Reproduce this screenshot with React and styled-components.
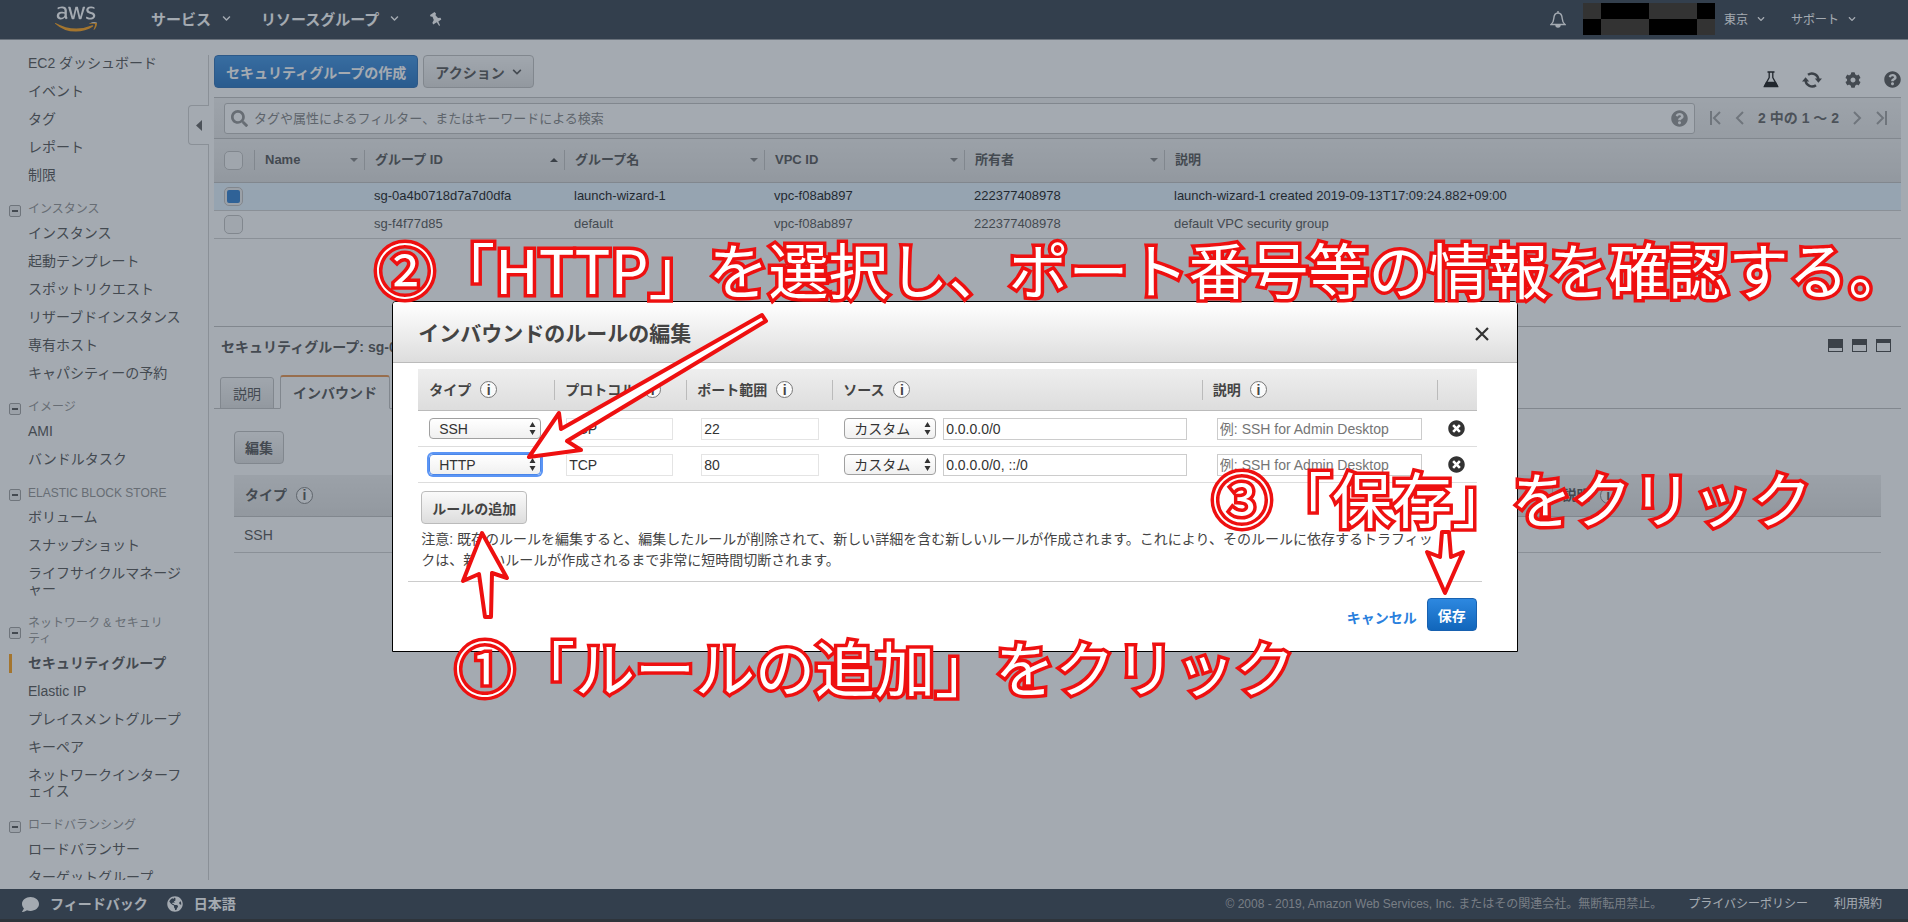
import styled, { createGlobalStyle, css } from 'styled-components'
import { FaAws, FaChevronDown, FaCog, FaComment, FaGlobeAmericas, FaQuestionCircle, FaSearch, FaTimesCircle } from 'react-icons/fa'

const GlobalStyle = createGlobalStyle`
    * {
        box-sizing: border-box;
    }

    body {
        margin: 0;
        background: #ffffff;
        color: #444444;
        font-family: "Liberation Sans", "Noto Sans CJK JP", sans-serif;
        font-size: 14px;
        line-height: 16px;
    }

    button, input, select {
        margin: 0;
        font-family: inherit;
        font-size: 14px;
        color: inherit;
    }

    a {
        color: inherit;
        text-decoration: none;
    }

    svg {
        display: block;
        flex: none;
    }
`

const sections = [
    {items: ["EC2 ダッシュボード", "イベント", "タグ", "レポート", "制限"]},
    {title: "インスタンス", items: ["インスタンス", "起動テンプレート", "スポットリクエスト", "リザーブドインスタンス", "専有ホスト", "キャパシティーの予約"]},
    {title: "イメージ", items: ["AMI", "バンドルタスク"]},
    {title: "ELASTIC BLOCK STORE", items: ["ボリューム", "スナップショット", "ライフサイクルマネージャー"]},
    {title: "ネットワーク & セキュリティ", items: ["セキュリティグループ", "Elastic IP", "プレイスメントグループ", "キーペア", "ネットワークインターフェイス"]},
    {title: "ロードバランシング", items: ["ロードバランサー", "ターゲットグループ"]},
]

const columns = [
    {name: "Name", width: 110, sort: "down"},
    {name: "グループ ID", width: 200, sort: "up"},
    {name: "グループ名", width: 200, sort: "down"},
    {name: "VPC ID", width: 200, sort: "down"},
    {name: "所有者", width: 200, sort: "down"},
    {name: "説明"},
]

const groups = [
    {id: "sg-0a4b0718d7a7d0dfa", name: "launch-wizard-1", vpc: "vpc-f08ab897", owner: "222377408978", description: "launch-wizard-1 created 2019-09-13T17:09:24.882+09:00", selected: true},
    {id: "sg-f4f77d85", name: "default", vpc: "vpc-f08ab897", owner: "222377408978", description: "default VPC security group", selected: false},
]

const ruleColumns = [
    {name: "タイプ", width: 136},
    {name: "プロトコル", width: 132},
    {name: "ポート範囲", width: 146},
    {name: "ソース"},
    {name: "説明", width: 235},
]

const rules = [
    {type: "SSH", protocol: "TCP", port: "22", source: "0.0.0.0/0"},
    {type: "HTTP", protocol: "TCP", port: "80", source: "0.0.0.0/0, ::/0", focused: true},
]

const Page = styled.div`
    display: flex;
    flex-direction: column;
    height: 100vh;
    overflow: hidden;
`

const TopBar = styled.header`
    display: flex;
    align-items: center;
    height: 40px;
    flex: none;
    padding: 0 52px 2px 55px;
    background: #232f3e;
    border-bottom: 1px solid #8c9196;
    color: #ffffff;
`

const LogoLink = styled.a`
    margin-right: 54px;
`

const LogoFill = styled.svg`
    position: absolute;
`

const NavButton = styled.button`
    display: flex;
    align-items: center;
    gap: ${props => props.$small ? 9 : 11}px;
    margin-right: ${props => props.$small ? 26 : 30}px;
    padding: 0;
    border: 0;
    background: none;
    font-size: ${props => props.$small ? 12 : 15}px;
    font-weight: ${props => props.$small ? 400 : 700};
    white-space: nowrap;

    &:last-child {
        margin-right: 0;
    }
`

const IconButton = styled.button`
    display: flex;
    padding: 0;
    border: 0;
    background: none;
`

const Spacer = styled.div`
    flex: 1;
`

const AccountMask = styled.div`
    position: relative;
    z-index: 20;
    display: grid;
    grid-template-columns: 18px 48px 48px 18px;
    grid-template-rows: 16px 16px;
    margin: 0 9px 0 17px;
`

const MaskCell = styled.div`
    background: ${props => props.$dark ? '#000000' : '#333333'};
`

const Body = styled.div`
    display: flex;
    flex: 1;
    min-height: 0;
    padding-bottom: 9px;
`

const Sidebar = styled.nav`
    width: 208px;
    flex: none;
    padding: 9px 24px 0 9px;
    overflow: hidden;
`

const SectionTitle = styled.h2`
    display: flex;
    align-items: center;
    gap: 7px;
    margin: 0;
    padding: 12px 10px 2px 0;
    color: #888888;
    font-size: 12px;
    font-weight: 400;
    line-height: 16px;
`

const CollapseBox = styled.button`
    display: flex;
    align-items: center;
    justify-content: center;
    width: 12px;
    height: 12px;
    flex: none;
    margin-top: 4px;
    padding: 0;
    border: 1px solid #999999;
    border-radius: 2px;
    background: #eeeeee;

    &::before {
        content: "";
        width: 6px;
        height: 2px;
        background: #444444;
    }
`

const SideLink = styled.a`
    display: block;
    padding: 6px 0 6px 19px;
    word-break: break-all;
    line-break: anywhere;

    ${props => props.$current && css`
        padding-left: 16px;
        border-left: 3px solid #ff9900;
        border-image: linear-gradient(transparent 20%, #ff9900 20%, #ff9900 84%, transparent 84%) 1;
        font-weight: 700;
    `}
`

const Divider = styled.div`
    position: relative;
    width: 1px;
    flex: none;
    margin-top: 15px;
    background: #cccccc;
`

const SidebarToggle = styled.button`
    position: absolute;
    top: 50px;
    right: 0;
    display: flex;
    align-items: center;
    justify-content: center;
    width: 21px;
    height: 40px;
    padding: 0;
    border: 1px solid #cccccc;
    border-right: 0;
    border-radius: 4px 0 0 4px;
    background: #ffffff;
`

const Main = styled.main`
    flex: 1;
    min-width: 0;
    padding: 15px 7px 0 5px;
`

const ActionRow = styled.div`
    display: flex;
    align-items: flex-end;
    gap: 5px;
    margin-bottom: 9px;
`

const Button = styled.button`
    display: inline-flex;
    align-items: center;
    gap: 7px;
    height: 33px;
    padding: 0 ${props => props.$wide ? 11 : 10}px;
    border: 1px solid #bbbbbb;
    border-radius: 4px;
    background: linear-gradient(#fafafa, #dddddd);
    font-weight: 700;
    white-space: nowrap;

    ${props => props.$primary && css`
        border-color: #1861b0;
        background: linear-gradient(#2d88e0, #1166bb);
        color: #ffffff;
    `}
`

const PageTools = styled.div`
    display: flex;
    align-items: center;
    gap: 23px;
    margin-left: auto;
`

const FilterBar = styled.div`
    display: flex;
    align-items: center;
    height: 42px;
    padding: 0 14px 0 10px;
    border-top: 1px solid #bbbbbb;
    border-bottom: 1px solid #bbbbbb;
    background: linear-gradient(#f2f2f2, #e4e4e4);
`

const SearchBox = styled.label`
    display: flex;
    align-items: center;
    gap: 6px;
    flex: 1;
    height: 31px;
    margin-right: 15px;
    padding: 0 6px;
    border: 1px solid #bbbbbb;
    border-radius: 3px;
    background: #ffffff;
    color: #888888;
`

const SearchInput = styled.input`
    flex: 1;
    min-width: 0;
    padding: 0;
    border: 0;
    background: none;
    font-size: 13px;

    &::placeholder {
        color: #777777;
    }
`

const Pager = styled.div`
    display: flex;
    align-items: center;
    gap: 14px;
    color: #555555;
    font-weight: 700;
    white-space: nowrap;
`

const GroupTable = styled.table`
    width: 100%;
    border-collapse: collapse;
    table-layout: fixed;
    font-size: 13px;

    th {
        height: 43px;
        padding: 0;
        border-bottom: 1px solid #bbbbbb;
        background: linear-gradient(#eeeeee, #dddddd);
        text-align: left;
    }

    td {
        height: 28px;
        padding: 0 10px;
        border-bottom: 1px solid #cccccc;
    }

    th:first-child, td:first-child {
        padding: 0 0 0 10px;
    }
`

const GroupRow = styled.tr`
    background: ${props => props.$selected ? '#e4f3ff' : '#ffffff'};
    color: ${props => props.$selected ? '#000000' : '#444444'};
`

const HeaderCell = styled.div`
    display: flex;
    align-items: center;
    gap: 9px;
    height: 20px;
    padding: 0 6px 0 ${props => props.$first ? 11 : 10}px;
    border-left: ${props => props.$first ? 0 : '1px solid #bbbbbb'};
    white-space: nowrap;
`

const SortMark = styled.span`
    margin-left: auto;
    border: 4px solid transparent;
    border-top-width: ${props => props.$up ? 0 : 4}px;
    border-bottom-width: ${props => props.$up ? 4 : 0}px;
    border-top-color: #777777;
    border-bottom-color: #333333;
`

const Checkbox = styled.input`
    display: block;
    appearance: none;
    width: 19px;
    height: 19px;
    margin: 0;
    border: 1px solid #bbbbbb;
    border-radius: 5px;
    background: #f8f8f8;

    &:checked {
        border-width: 3px;
        border-color: #eeeeee;
        outline: 1px solid #bbbbbb;
        outline-offset: -1px;
        background: #1c74cc;
    }
`

const DetailPane = styled.section`
    margin-top: 87px;
    border-top: 1px solid #bbbbbb;
`

const DetailHeader = styled.div`
    display: flex;
    align-items: center;
    justify-content: space-between;
    height: 40px;
    padding: 0 10px 0 7px;
`

const DetailTitle = styled.h2`
    margin: 0;
    font-size: 14px;
`

const PaneButtons = styled.div`
    display: flex;
    gap: 9px;
    margin-bottom: 2px;
`

const PaneButton = styled.button`
    width: 15px;
    height: 13px;
    padding: 0;
    border: 1px solid #333333;
    background: linear-gradient(#333333 ${props => props.$fill}px, transparent ${props => props.$fill}px);
`

const Tabs = styled.div`
    display: flex;
    align-items: flex-end;
    gap: 6px;
    margin-top: 8px;
    padding-left: 6px;
    box-shadow: inset 0 -1px #bbbbbb;
`

const Tab = styled.button`
    height: ${props => props.$active ? 34 : 32}px;
    padding: 0 12px;
    border: 1px solid #bbbbbb;
    border-top: ${props => props.$active ? '2px solid #e88b3e' : '1px solid #bbbbbb'};
    border-bottom-color: ${props => props.$active ? '#ffffff' : '#bbbbbb'};
    border-radius: 3px 3px 0 0;
    background: ${props => props.$active ? '#ffffff' : 'linear-gradient(#f8f8f8, #dddddd)'};
    font-weight: ${props => props.$active ? 700 : 400};
`

const TabPanel = styled.div`
    padding: 22px 20px 0;
`

const RuleTable = styled.table`
    width: 100%;
    border-collapse: collapse;
    table-layout: fixed;

    th {
        height: 42px;
        padding: 0;
        border-bottom: 1px solid #bbbbbb;
        background: linear-gradient(#eeeeee, #dddddd);
        text-align: left;
    }

    td {
        height: 36px;
        padding: 0 0 0 10px;
        border-bottom: 1px solid #cccccc;
    }
`

const DetailTable = styled(RuleTable)`
    margin-top: 11px;
`

const EditTable = styled(RuleTable)`
    td {
        padding: 0 0 0 11px;
        border-bottom-color: #dddddd;
    }

    td:nth-child(2), td:nth-child(4) {
        padding-left: 12px;
    }

    td:nth-child(3), td:nth-child(5) {
        padding-left: 15px;
    }
`

const InfoMark = styled.span`
    display: inline-flex;
    align-items: center;
    justify-content: center;
    width: 17px;
    height: 17px;
    border: 1px solid #777777;
    border-radius: 50%;
    background: #fafafa;
    font-size: 14px;
`

const Footer = styled.footer`
    display: flex;
    align-items: center;
    height: 33px;
    flex: none;
    padding: 0 26px 0 22px;
    border-bottom: 3px solid #1a1a1a;
    background: #232f3e;
    color: #ffffff;
    white-space: nowrap;
`

const FooterLink = styled.a`
    display: flex;
    align-items: center;
    gap: 11px;
    margin-right: 19px;
    font-weight: 700;
`

const LegalRow = styled.div`
    display: flex;
    gap: 26px;
    margin-left: auto;
    font-size: 12px;

    span {
        color: #aaaaaa;
    }
`

const Backdrop = styled.div`
    position: fixed;
    inset: 0;
    z-index: 10;
    display: flex;
    align-items: center;
    justify-content: center;
    padding: 31px 0 0 2px;
    background: rgba(68, 80, 95, 0.486);
`

const Dialog = styled.section`
    width: 59vw;
    border: 1px solid #000000;
    border-radius: 4px 4px 0 0;
    background: #ffffff;
    overflow: hidden;
`

const DialogHeader = styled.div`
    display: flex;
    align-items: center;
    justify-content: space-between;
    height: 61px;
    padding: 5px 28px 0 25px;
    border-bottom: 1px solid #bbbbbb;
    background: linear-gradient(#ffffff, #dddddd);
`

const DialogTitle = styled.h1`
    margin: 0;
    font-size: 21px;
    line-height: 28px;
`

const DialogBody = styled.div`
    padding: 6px 40px 10px 25px;
`

const SelectWrap = styled.span`
    position: relative;
    display: block;
    width: ${props => props.$width}px;
    flex: none;
`

const Select = styled.select`
    display: block;
    appearance: none;
    width: 100%;
    height: 21px;
    padding: 0 20px 0 9px;
    border: 1px solid #a0a0a0;
    border-radius: 4px;
    background: linear-gradient(#ffffff, #f0f0f0);
    color: #333333;
    line-height: 18px;

    ${props => props.$focused && css`
        border-color: #4a86e8;
        box-shadow: 0 0 0 2px #5b95f5;
    `}
`

const SelectArrows = styled.svg`
    position: absolute;
    top: 4px;
    right: 5px;
    pointer-events: none;
`

const TextInput = styled.input`
    display: block;
    width: ${props => props.$width ? `${props.$width}px` : '100%'};
    height: 22px;
    min-width: 0;
    padding: 0 2px;
    border: 1px solid ${props => props.$faint ? '#e4e4e4' : '#cccccc'};
    background: #ffffff;
    color: #333333;

    &::placeholder {
        color: #757575;
    }
`

const SourceFields = styled.div`
    display: flex;
    align-items: center;
    gap: 7px;
    padding-right: 15px;
`

const AddRow = styled.div`
    padding: 8px 3px 5px;
`

const Notice = styled.p`
    margin: 0;
    padding: 0 42px 0 3px;
    line-height: 21px;
`

const DialogFooter = styled.div`
    display: flex;
    align-items: center;
    justify-content: flex-end;
    gap: 10px;
    margin: 0 35px 0 15px;
    padding: 16px 5px 20px;
    border-top: 1px solid #cccccc;
`

const CancelLink = styled.a`
    padding-top: 6px;
    color: #2a80dd;
    font-weight: 700;
`

const Notes = styled.div`
    position: absolute;
    inset: 0;
    z-index: 30;
    overflow: hidden;
    pointer-events: none;
`

const Note = styled.p`
    position: absolute;
    left: ${props => props.$x}px;
    top: ${props => props.$y}px;
    margin: 0;
    color: #ffffff;
    font-family: "Noto Sans CJK JP", sans-serif;
    font-size: 60px;
    line-height: 64px;
    white-space: nowrap;
    -webkit-text-stroke: 7px #ee1010;
    paint-order: stroke fill;
    stroke-linejoin: round;
`

const Arrows = styled.svg`
    width: 100%;
    height: 100%;
`

function Pin() {
    return (
        <svg width="13" height="14" viewBox="0 0 13 14" fill="currentColor">
            <path d="M1 3 5.500 0 7 1.500 6.500 3.200 9 6l2.500-.2.8 1.700-3 2 1.700 3.800-.8.6-2.400-3.600-3.600 2.200-.8-1.700L4.800 8 3.500 4.700 1.500 4.500Z" />
        </svg>
    )
}

function Bell() {
    return (
        <svg width="16" height="18" viewBox="0 0 16 18" fill="none" stroke="currentColor" strokeWidth="1.400">
            <path d="M8 1v1.500M1 14.500h14c-2-1.500-2.600-3-2.800-6C12 5 10.500 3 8 3S4 5 3.800 8.500c-.2 3-.8 4.500-2.800 6Z" />
            <path d="M6 15a2 2 0 0 0 4 0Z" fill="currentColor" />
        </svg>
    )
}

function Flask() {
    return (
        <svg width="16" height="17" viewBox="0 0 16 17" fill="none" stroke="#000000" strokeWidth="1.300">
            <path d="M4.500 1h7M6.200 1v5.500L1.500 15.200h13L9.800 6.500V1" />
            <path d="M3.500 11.500h9l2 4h-13Z" fill="#000000" />
        </svg>
    )
}

function Refresh() {
    return (
        <svg width="20" height="16" viewBox="0 0 20 16" fill="none" stroke="#333333" strokeWidth="2.400">
            <path d="M6 2.800A6.500 6.500 0 0 1 16.400 7.500M14 13.200A6.500 6.500 0 0 1 3.600 8.500" />
            <path d="M12.800 6.500h7.200l-3.600 4.300ZM0 9.500h7.200L3.600 5.200Z" fill="#333333" stroke="none" />
        </svg>
    )
}

function PagerIcon({ flip, bar }) {
    return (
        <svg width={bar ? 11 : 9} height="14" viewBox={bar ? '0 0 11 14' : '0 0 9 14'} fill="none" stroke="#999999" strokeWidth="2">
            <g transform={flip ? `translate(${bar ? 11 : 9} 0) scale(-1 1)` : undefined}>
                {bar ? <path d="M1 0v14M10 1 4 7l6 6" /> : <path d="M8 1 2 7l6 6" />}
            </g>
        </svg>
    )
}

function DropDown({ label, options, width, focused }) {
    return (
        <SelectWrap $width={width}>
            <Select aria-label={label} $focused={focused}>
                {options.map(option => <option key={option}>{option}</option>)}
            </Select>
            <SelectArrows width="7" height="13" viewBox="0 0 7 13" fill="#333333">
                <path d="M3.500 0 6.500 5h-6ZM3.500 13l3-5h-6Z" />
            </SelectArrows>
        </SelectWrap>
    )
}

function Navigation() {
    return (
        <TopBar>
            <LogoLink href="#" aria-label="aws">
                <LogoFill width="0" height="0">
                    <linearGradient id="logo" x1="0" y1="0" x2="0" y2="1">
                        <stop offset="0.640" stopColor="#ffffff" />
                        <stop offset="0.640" stopColor="#ff9900" />
                    </linearGradient>
                </LogoFill>
                <FaAws size={42} fill="url(#logo)" />
            </LogoLink>
            <NavButton>サービス<FaChevronDown size={9} /></NavButton>
            <NavButton>リソースグループ<FaChevronDown size={9} /></NavButton>
            <IconButton aria-label="pin"><Pin /></IconButton>
            <Spacer />
            <IconButton aria-label="bell"><Bell /></IconButton>
            <AccountMask>
                {[0, 1, 0, 1, 1, 0, 1, 0].map((dark, i) => <MaskCell key={i} $dark={dark} />)}
            </AccountMask>
            <NavButton $small>東京<FaChevronDown size={8} /></NavButton>
            <NavButton $small>サポート<FaChevronDown size={8} /></NavButton>
        </TopBar>
    )
}

function SideMenu() {
    return (
        <Sidebar>
            {sections.map((section, i) =>
            <div key={i}>
                {section.title && <SectionTitle><CollapseBox aria-label={section.title} />{section.title}</SectionTitle>}
                {section.items.map(item =>
                    <SideLink key={item} href="#" $current={item === "セキュリティグループ"}>{item}</SideLink>
                )}
            </div>
            )}
        </Sidebar>
    )
}

function SecurityGroups() {
    return (
        <GroupTable>
            <colgroup>
                <col width="40" />
                {columns.map(column => <col key={column.name} width={column.width} />)}
            </colgroup>
            <thead>
                <tr>
                    <th><Checkbox type="checkbox" aria-label="all" /></th>
                    {columns.map(column =>
                    <th key={column.name}>
                        <HeaderCell>
                            {column.name}
                            {column.sort && <SortMark $up={column.sort === "up"} />}
                        </HeaderCell>
                    </th>
                    )}
                </tr>
            </thead>
            <tbody>
                {groups.map(group =>
                <GroupRow key={group.id} $selected={group.selected}>
                    <td><Checkbox type="checkbox" aria-label={group.id} defaultChecked={group.selected} /></td>
                    <td></td>
                    <td>{group.id}</td>
                    <td>{group.name}</td>
                    <td>{group.vpc}</td>
                    <td>{group.owner}</td>
                    <td>{group.description}</td>
                </GroupRow>
                )}
            </tbody>
        </GroupTable>
    )
}

function Details() {
    return (
        <DetailPane>
            <DetailHeader>
                <DetailTitle>セキュリティグループ: {groups[0].id}</DetailTitle>
                <PaneButtons>
                    <PaneButton aria-label="bottom" $fill={8} />
                    <PaneButton aria-label="split" $fill={5} />
                    <PaneButton aria-label="top" $fill={3} />
                </PaneButtons>
            </DetailHeader>
            <Tabs>
                <Tab>説明</Tab>
                <Tab $active>インバウンド</Tab>
            </Tabs>
            <TabPanel>
                <Button>編集</Button>
                <DetailTable>
                    <thead>
                        <tr>
                            <th width="80%"><HeaderCell $first>タイプ<InfoMark>i</InfoMark></HeaderCell></th>
                            <th><HeaderCell>説明<InfoMark>i</InfoMark></HeaderCell></th>
                        </tr>
                    </thead>
                    <tbody>
                        <tr>
                            <td>SSH</td>
                            <td></td>
                        </tr>
                    </tbody>
                </DetailTable>
            </TabPanel>
        </DetailPane>
    )
}

function RuleDialog() {
    return (
        <Backdrop>
            <Dialog role="dialog" aria-labelledby="dialog-title">
                <DialogHeader>
                    <DialogTitle id="dialog-title">インバウンドのルールの編集</DialogTitle>
                    <IconButton aria-label="close">
                        <svg width="14" height="14" viewBox="0 0 14 14" stroke="#333333" strokeWidth="2.200">
                            <path d="M1 1l12 12M13 1 1 13" />
                        </svg>
                    </IconButton>
                </DialogHeader>
                <DialogBody>
                    <EditTable>
                        <colgroup>
                            {ruleColumns.map(column => <col key={column.name} width={column.width} />)}
                            <col width="40" />
                        </colgroup>
                        <thead>
                            <tr>
                                {ruleColumns.map((column, i) =>
                                <th key={column.name}>
                                    <HeaderCell $first={i === 0}>{column.name}<InfoMark>i</InfoMark></HeaderCell>
                                </th>
                                )}
                                <th><HeaderCell /></th>
                            </tr>
                        </thead>
                        <tbody>
                            {rules.map(rule =>
                            <tr key={rule.type}>
                                <td><DropDown label="タイプ" options={[rule.type]} width={112} focused={rule.focused} /></td>
                                <td><TextInput aria-label="プロトコル" $width={107} $faint readOnly value={rule.protocol} /></td>
                                <td><TextInput aria-label="ポート範囲" $width={118} $faint readOnly value={rule.port} /></td>
                                <td>
                                    <SourceFields>
                                        <DropDown label="ソース" options={["カスタム"]} width={92} />
                                        <TextInput aria-label="ソース" defaultValue={rule.source} />
                                    </SourceFields>
                                </td>
                                <td><TextInput aria-label="説明" $width={205} placeholder="例: SSH for Admin Desktop" /></td>
                                <td><IconButton aria-label="delete"><FaTimesCircle size={17} color="#333333" /></IconButton></td>
                            </tr>
                            )}
                        </tbody>
                    </EditTable>
                    <AddRow>
                        <Button>ルールの追加</Button>
                    </AddRow>
                    <Notice>注意: 既存のルールを編集すると、編集したルールが削除されて、新しい詳細を含む新しいルールが作成されます。これにより、そのルールに依存するトラフィックは、新しいルールが作成されるまで非常に短時間切断されます。</Notice>
                </DialogBody>
                <DialogFooter>
                    <CancelLink href="#">キャンセル</CancelLink>
                    <Button $primary>保存</Button>
                </DialogFooter>
            </Dialog>
        </Backdrop>
    )
}

function Annotations() {
    return (
        <Notes>
            <Arrows fill="#ffffff" stroke="#ee1010" strokeWidth="4" strokeLinejoin="round">
                <path d="M762 315 561 429 559 413 529 457 581 450 567 441 766 321Z" />
                <path d="M482 533 507 578 492 573 491 617 485 617 479 574 463 581Z" />
                <path d="M1442 532h7l2 25 12-5-18 41-18-41 13 5Z" />
            </Arrows>
            <Note $x={375} $y={236}>②「HTTP」を選択し、ポート番号等の情報を確認する。</Note>
            <Note $x={455} $y={634}>①「ルールの追加」をクリック</Note>
            <Note $x={1212} $y={465}>③「保存」をクリック</Note>
        </Notes>
    )
}

export default function App() {
    return (
        <Page>
            <GlobalStyle />
            <Navigation />
            <Body>
                <SideMenu />
                <Divider>
                    <SidebarToggle aria-label="toggle">
                        <svg width="6" height="11" viewBox="0 0 6 11" fill="#555555"><path d="M6 0v11L0 5.500Z" /></svg>
                    </SidebarToggle>
                </Divider>
                <Main>
                    <ActionRow>
                        <Button $primary $wide>セキュリティグループの作成</Button>
                        <Button $wide>アクション<FaChevronDown size={10} /></Button>
                        <PageTools>
                            <IconButton aria-label="flask"><Flask /></IconButton>
                            <IconButton aria-label="refresh"><Refresh /></IconButton>
                            <IconButton aria-label="settings"><FaCog size={16} /></IconButton>
                            <IconButton aria-label="help"><FaQuestionCircle size={17} /></IconButton>
                        </PageTools>
                    </ActionRow>
                    <FilterBar>
                        <SearchBox>
                            <FaSearch size={17} />
                            <SearchInput placeholder="タグや属性によるフィルター、またはキーワードによる検索" />
                            <FaQuestionCircle size={17} />
                        </SearchBox>
                        <Pager>
                            <PagerIcon bar />
                            <PagerIcon />
                            2 中の 1 ～ 2
                            <PagerIcon flip />
                            <PagerIcon flip bar />
                        </Pager>
                    </FilterBar>
                    <SecurityGroups />
                    <Details />
                </Main>
            </Body>
            <Footer>
                <FooterLink href="#"><FaComment size={17} />フィードバック</FooterLink>
                <FooterLink href="#"><FaGlobeAmericas size={16} />日本語</FooterLink>
                <LegalRow>
                    <span>© 2008 - 2019, Amazon Web Services, Inc. またはその関連会社。無断転用禁止。</span>
                    <a href="#">プライバシーポリシー</a>
                    <a href="#">利用規約</a>
                </LegalRow>
            </Footer>
            <RuleDialog />
            <Annotations />
        </Page>
    )
}
